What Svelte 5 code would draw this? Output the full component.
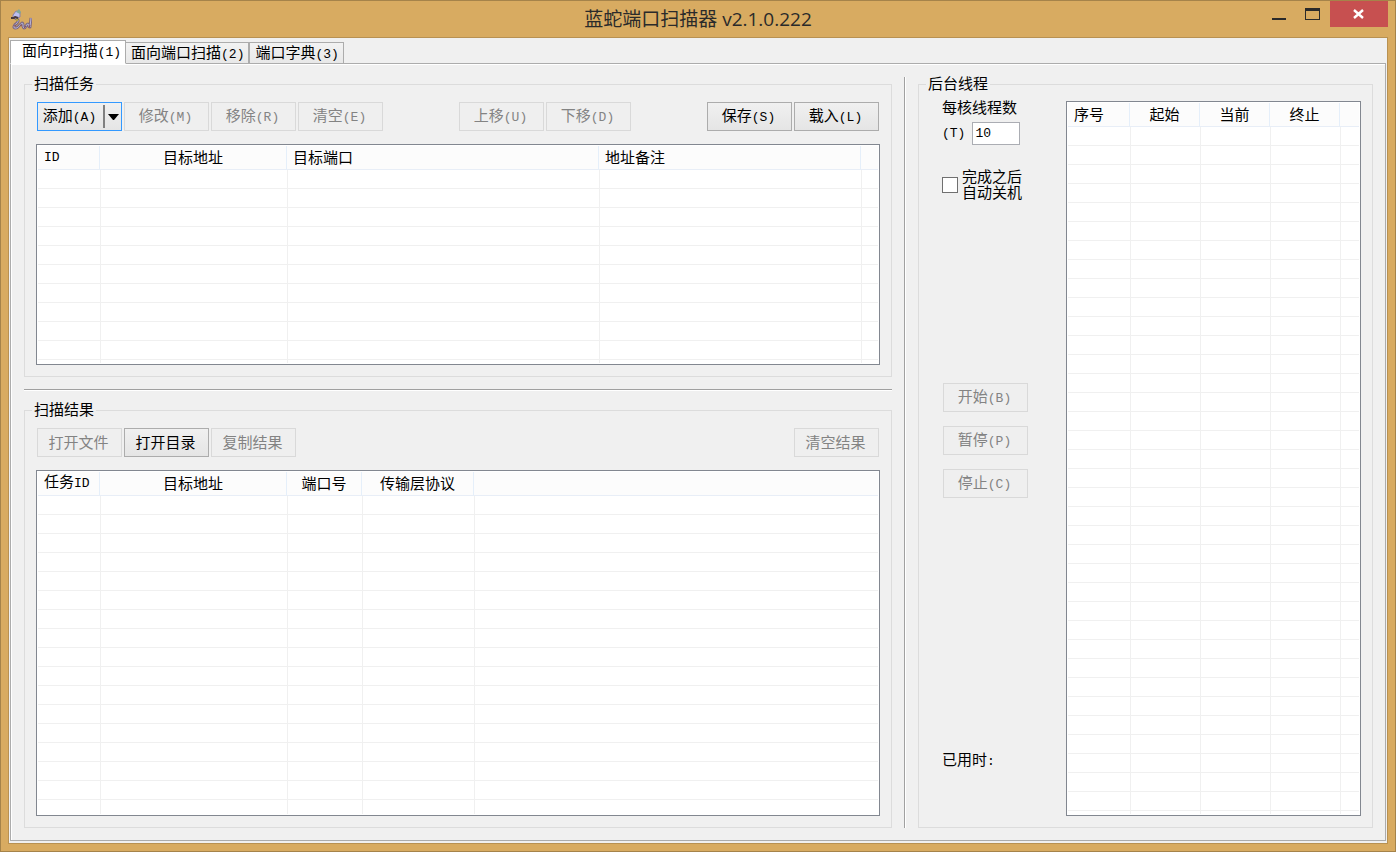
<script lang="ts">
  type Column = { title: string; width?: number; center?: boolean }

  const tabs = ['面向IP扫描(1)', '面向端口扫描(2)', '端口字典(3)']
  let activeTab = $state(0)
  let threads = $state('10')
  let shutdown = $state(false)

  const taskColumns: Column[] = [
    { title: 'ID', width: 62 },
    { title: '目标地址', width: 187, center: true },
    { title: '目标端口', width: 312 },
    { title: '地址备注', width: 262 },
    { title: '' }
  ]
  const resultColumns: Column[] = [
    { title: '任务ID', width: 62 },
    { title: '目标地址', width: 187, center: true },
    { title: '端口号', width: 75, center: true },
    { title: '传输层协议', width: 112, center: true },
    { title: '' }
  ]
  const threadColumns: Column[] = [
    { title: '序号', width: 62 },
    { title: '起始', width: 70, center: true },
    { title: '当前', width: 70, center: true },
    { title: '终止', width: 70, center: true },
    { title: '' }
  ]

  // splits a caption into latin and chinese runs, each has its own font
  const runs = (text: string) => text.match(/[\x20-\x7e]+|[^\x20-\x7e]+/g) ?? []
</script>

{#snippet caption(text: string)}
  {#each runs(text) as run}{#if /^[\x20-\x7e]/.test(run)}<span class="latin">{run}</span>{:else}{run}{/if}{/each}
{/snippet}

{#snippet button(text: string, disabled = false)}
  <button class="btn" {disabled}>{@render caption(text)}</button>
{/snippet}

{#snippet list(label: string, columns: Column[], rows: number)}
  <div class="list">
    <div class="view">
      <table aria-label={label}>
        <colgroup>
          {#each columns as col}
            <col style:width={col.width ? `${col.width}px` : 'auto'} />
          {/each}
        </colgroup>
        <thead>
          <tr>
            {#each columns as col}
              <th class:center={col.center}>{@render caption(col.title)}</th>
            {/each}
          </tr>
        </thead>
        <tbody>
          {#each Array(rows) as _}
            <tr>{#each columns as _}<td></td>{/each}</tr>
          {/each}
        </tbody>
      </table>
    </div>
  </div>
{/snippet}

<div class="window">
  <header class="title-bar">
    <svg class="logo" width="22" height="22" viewBox="0 0 22 22" fill="none" stroke-linejoin="round">
      <path d="M5 9c3 1 4 3 2 5-3 2-4 5-2 5 3 1 5-4 7-5 2 0 0 4 2 5 2 0 2-4 4-4 1 0 0 3 2 3l1-9" stroke="#7d6a80" stroke-width="3" />
      <path d="M5 9c3 1 4 3 2 5-3 2-4 5-2 5 3 1 5-4 7-5 2 0 0 4 2 5 2 0 2-4 4-4 1 0 0 3 2 3l1-9" stroke="#b9b2d6" stroke-width="1" />
      <path d="M3 6 6 2l4 1v5L6 9 3 8z" fill="#bcbff0" stroke="#8b80a6" />
      <path d="M6 3 9 0l2 3-1 2z" fill="#7fa79a" />
      <path d="M1 9h3l1-1 3 1" stroke="#473a3e" stroke-width="2" />
      <path d="M6 10h2v2H6z" fill="#b5a83c" />
      <path d="m4 17 2-1m4 0 2 1m2 2 2-2m3 2 1-3" stroke="#8f525c" />
    </svg>
    <h1>蓝蛇端口扫描器 v2.1.0.222</h1>
    <div class="controls">
      <button class="min" aria-label="最小化">
        <svg width="16" height="12" viewBox="0 0 16 12"><path d="M1 10h14v2H1z" fill="#2a2a2a" /></svg>
      </button>
      <button class="max" aria-label="最大化">
        <svg width="16" height="12" viewBox="0 0 16 12"><path d="M0 0h15v12H0zM1 3v8h13V3z" fill="#2a2a2a" fill-rule="evenodd" /></svg>
      </button>
      <button class="close" aria-label="关闭">
        <svg width="12" height="10" viewBox="0 0 12 10"><path d="m1 1 9 8m0-8-9 8" stroke="#fff" stroke-width="2.4" /></svg>
      </button>
    </div>
  </header>

  <main class="client">
    <div class="tabs" role="tablist">
      {#each tabs as tab, i}
        <button class="tab" class:active={activeTab === i} role="tab" aria-selected={activeTab === i} onclick={() => (activeTab = i)}>
          {@render caption(tab)}
        </button>
      {/each}
    </div>

    <div class="panel" role="tabpanel">
      <div class="left">
        <fieldset class="tasks">
          <legend>扫描任务</legend>
          <div class="group">
            <div class="toolbar">
              <div class="buttons">
                <button class="btn split">
                  <span class="split-text">{@render caption('添加(A)')}</span>
                  <span class="split-arrow"><svg width="11" height="6" viewBox="0 0 11 6"><path d="M0 0h11L6 6H5z" /></svg></span>
                </button>
                {@render button('修改(M)', true)}
                {@render button('移除(R)', true)}
                {@render button('清空(E)', true)}
              </div>
              <div class="buttons">
                {@render button('上移(U)', true)}
                {@render button('下移(D)', true)}
              </div>
              <div class="buttons">
                {@render button('保存(S)')}
                {@render button('载入(L)')}
              </div>
            </div>
            {@render list('扫描任务', taskColumns, 12)}
          </div>
        </fieldset>

        <hr />

        <fieldset class="results">
          <legend>扫描结果</legend>
          <div class="group">
            <div class="toolbar">
              <div class="buttons">
                {@render button('打开文件', true)}
                {@render button('打开目录')}
                {@render button('复制结果', true)}
              </div>
              {@render button('清空结果', true)}
            </div>
            {@render list('扫描结果', resultColumns, 80)}
          </div>
        </fieldset>
      </div>

      <div class="divider"></div>

      <fieldset class="threads">
        <legend>后台线程</legend>
        <div class="group">
          <div class="side">
            <label class="count">
              <span class="count-text">每核线程数</span>
              <span class="latin">(T)</span>
              <input type="text" class="latin" bind:value={threads} />
            </label>
            <label class="shutdown">
              <input type="checkbox" bind:checked={shutdown} />
              <span>完成之后<br />自动关机</span>
            </label>
            <div class="actions">
              {@render button('开始(B)', true)}
              {@render button('暂停(P)', true)}
              {@render button('停止(C)', true)}
            </div>
            <p class="elapsed">已用时<span class="latin">:</span></p>
          </div>
          {@render list('后台线程', threadColumns, 100)}
        </div>
      </fieldset>
    </div>
  </main>
</div>

<style>
  :global(body) { margin: 0; }

  .window {
    box-sizing: border-box;
    display: flex; flex-direction: column;
    height: 100vh; min-height: 700px; min-width: 1200px;
    padding: 0 7px 7px;
    border: 1px solid #a5834a;
    background: #d8ab61;
    color: #000;
    font: 15px/15px 'Noto Sans CJK SC', sans-serif;
  }
  .window * { box-sizing: border-box; }
  button, input { font: inherit; color: inherit; }
  .latin { font-family: 'Liberation Mono', monospace; font-size: 13px; }

  .title-bar {
    display: grid;
    grid-template-columns: 1fr auto 1fr;
    height: 36px; flex: none;
  }
  .logo { margin: 8px 0 0 2px; }
  h1 {
    margin: 0;
    font: 19px/36px 'Open Sans', 'Noto Sans CJK SC', sans-serif;
    color: #2a2a2a;
  }
  .controls { display: flex; justify-content: flex-end; height: 26px; }
  .controls button {
    display: flex; align-items: center; justify-content: center;
    width: 34px; padding: 0;
    border: none; background: none;
  }
  .controls .close { width: 58px; background: #c75050; }

  .client {
    flex: 1; min-height: 0;
    display: flex; flex-direction: column;
    padding: 2px 1px;
    border: 1px solid #b89152;
    background: #f0f0f0;
  }

  .tabs { display: flex; align-items: flex-end; flex: none; height: 24px; }
  .tab {
    height: 22px;
    padding: 0 4px 0 5px;
    border: 1px solid #acacac;
    border-left-width: 0;
    background: linear-gradient(#f2f2f2, #e8e8e8);
    white-space: nowrap;
  }
  .tab + .tab + .tab { border-left-width: 1px; }
  .tab.active {
    position: relative;
    height: 24px;
    padding: 0 4px 2px 11px;
    border-left-width: 1px;
    border-bottom-color: #fff;
    background: #fff;
  }

  .panel {
    flex: 1; min-height: 0;
    display: flex; gap: 12px;
    margin-top: -1px;
    padding: 13px 12px 12px 13px;
    border: 1px solid #acacac;
    box-shadow: inset 1px 1px #fff;
  }
  .left {
    flex: 1; min-width: 0;
    display: flex; flex-direction: column; gap: 12px;
  }
  .divider { flex: none; width: 2px; background: linear-gradient(90deg, #a0a0a0 50%, #fff 50%); }
  hr {
    flex: none; width: 100%; height: 2px; margin: 0;
    border: solid; border-width: 1px 0;
    border-color: #a0a0a0 #fff #fff;
  }

  fieldset {
    display: flex;
    min-width: 0; min-height: 0; margin: 0; padding: 0;
    border: 1px solid #dcdcdc;
  }
  legend { margin-left: 7px; padding: 0 2px 3px; line-height: 12px; }
  .group {
    flex: 1; min-width: 0;
    display: flex; flex-direction: column; gap: 12px;
    padding: 9px 11px 11px;
  }
  .tasks { height: 300px; flex: none; }
  .results { flex: 1; }
  .threads { width: 455px; flex: none; }
  .threads .group { flex-direction: row; gap: 0; padding-left: 23px; }

  .toolbar { display: flex; justify-content: space-between; padding: 1px 1px 0; margin-bottom: 1px; }
  .buttons { display: flex; gap: 2px; }
  .btn {
    width: 85px; height: 29px; padding: 0 2px 2px 0;
    border: 1px solid #acacac;
    background: linear-gradient(#f0f0f0, #e5e5e5);
    white-space: nowrap;
  }
  .btn:disabled { border-color: #d9d9d9; background: #efefef; color: #838383; }
  .split { display: flex; align-items: center; padding: 0; border-color: #3399ff; }
  .split-text { flex: 1; padding: 0 2px 2px 0; }
  .split-arrow {
    display: flex; align-items: center; justify-content: center;
    width: 18px; height: 23px;
    border-left: 2px solid #808080;
  }

  .list {
    flex: 1; min-height: 0; min-width: 0;
    display: flex;
    padding: 1px;
    border: 1px solid #828790;
    background: #fff;
  }
  .view { flex: 1; min-width: 0; overflow: hidden; }
  table { width: 100%; table-layout: fixed; border-spacing: 0; }
  th {
    height: 24px; padding: 0 6px 3px;
    border-right: 1px solid #e5effa;
    border-bottom: 1px solid #e8eef7;
    background: #fcfcfc;
    font-weight: 400; text-align: left; white-space: nowrap;
  }
  th:last-child { border-right: none; }
  th.center { padding: 0 0 3px; text-align: center; }
  td { height: 19px; padding: 0; border-bottom: 1px solid #f0f0f0; }
  td + td { border-left: 1px solid #f0f0f0; }

  .side { flex: none; width: 124px; display: flex; flex-direction: column; padding-bottom: 47px; }
  .count { display: flex; flex-wrap: wrap; align-items: center; row-gap: 6px; width: 90px; }
  .count-text { width: 100%; padding-bottom: 3px; line-height: 12px; }
  .count input { width: 48px; height: 23px; margin-left: 7px; padding: 0 2px; border: 1px solid #abadb3; background: #fff; }
  .shutdown { display: flex; align-items: center; gap: 4px; margin-top: 23px; line-height: 16px; }
  .shutdown span { padding-bottom: 2px; }
  .shutdown input {
    appearance: none;
    width: 16px; height: 16px; margin: 0;
    border: 1px solid #707070;
    background: #fff;
  }
  .shutdown input:checked { box-shadow: inset 0 0 0 3px #fff; background: #212121; }
  .actions { display: flex; flex-direction: column; gap: 14px; margin-top: 181px; padding-left: 1px; }
  .elapsed { margin: auto 0 0; }
</style>
